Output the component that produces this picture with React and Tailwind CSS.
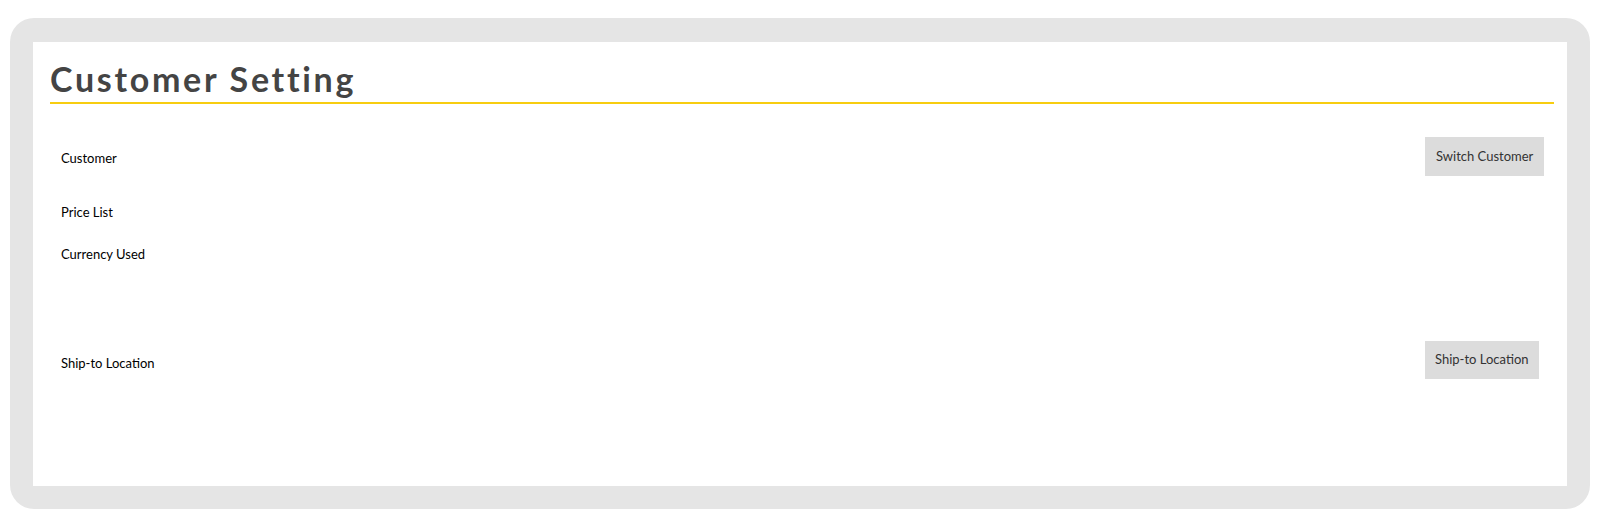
export default function App() {
  return (
    <div className="min-h-screen bg-white pt-[18px] px-[10px] pb-[10px]" style={{ fontFamily: 'Lato, "Liberation Sans", sans-serif' }}>
      <div className="rounded-[24px] bg-[#e5e5e5] pt-[24px] px-[23px] pb-[23px]">
        <div className="h-[444px] bg-white pl-[17px] pr-[13px]">
          {/* Header */}
          <div className="border-b-2 border-[#f7cd10] pt-[15px] pb-[2px]">
            <h1 className="text-[34px] leading-[43px] font-bold text-[#444] tracking-[2.7px]">Customer Setting</h1>
          </div>

          {/* Customer */}
          <div className="mt-[33px] flex items-center justify-between h-[39px]">
            <span className="pl-[11px] pt-[3px] text-[13px] leading-[20px] text-black">Customer</span>
            <div className="w-[129px]">
              <button className="h-[39px] px-[11px] bg-[#dcdcdc] text-[13px] text-[#333]">Switch Customer</button>
            </div>
          </div>

          <div className="mt-[26px] pl-[11px] text-[13px] leading-[20px] text-black">Price List</div>
          <div className="mt-[22px] pl-[11px] text-[13px] leading-[20px] text-black">Currency Used</div>

          {/* Ship-to */}
          <div className="mt-[77px] flex items-start justify-between h-[38px]">
            <span className="pl-[11px] pt-[12px] text-[13px] leading-[20px] text-black">Ship-to Location</span>
            <div className="w-[129px]">
              <button className="h-[38px] px-[10px] bg-[#dcdcdc] text-[13px] text-[#333]">Ship-to Location</button>
            </div>
          </div>
        </div>
      </div>
    </div>
  )
}
